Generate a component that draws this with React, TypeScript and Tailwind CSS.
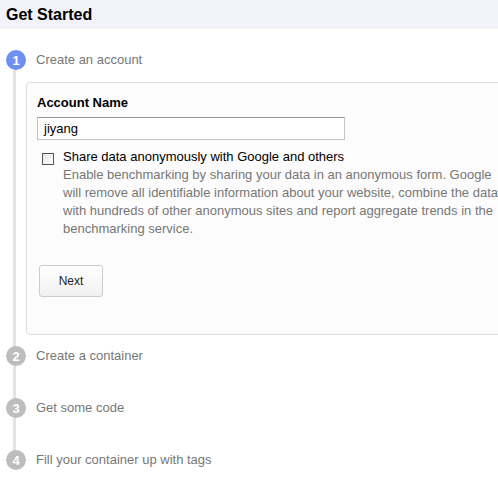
import React from "react";

function Step({ n, label, active }: { n: number; label: string; active?: boolean }) {
  return (
    <div className="relative flex h-[20px] items-center">
      <div
        className={
          active
            ? "flex h-[20px] w-[20px] items-center justify-center rounded-full bg-[#6d8ff0] text-[13px] font-bold leading-none text-white"
            : "flex h-[20px] w-[20px] items-center justify-center rounded-full bg-[#bdbdbd] text-[13px] font-bold leading-none text-white"
        }
      >
        {n}
      </div>
      <div className="ml-[10px] text-[13px] text-[#777777]">{label}</div>
    </div>
  );
}

export default function App() {
  return (
    <div className="h-[482px] w-[498px] overflow-hidden bg-white font-['Liberation_Sans',Arial,sans-serif]">
      <div className="flex h-[29px] items-center bg-[#f2f3f8] pl-[6px] text-[16px] font-bold text-black">
        Get Started
      </div>
      <div className="relative pl-[6px] pt-[21px]">
        <div className="absolute left-[13px] top-[31px] h-[399px] w-[3px] bg-[#e3e3e3]" />
        <Step n={1} label="Create an account" active />
        <div className="relative ml-[20px] mt-[12px] h-[253px] w-[490px] rounded-[4px] border border-[#dddddd] bg-[#fcfcfc] pl-[10px] pt-[13px]">
          <div className="text-[13px] font-bold leading-[14px] text-black">Account Name</div>
          <div className="mt-[7px] flex h-[23px] w-[308px] items-center border border-[#c4c4c4] border-t-[#9a9a9a] bg-white pl-[6px] text-[13px] text-black">
            jiyang
          </div>
          <div className="mt-[8px] flex">
            <div className="ml-[5px] mt-[5px] h-[12px] w-[12px] border border-[#555555] bg-gradient-to-br from-[#e6e6e6] to-white" />
            <div className="ml-[9px] w-[440px]">
              <div className="text-[13px] leading-[18px] text-black">Share data anonymously with Google and others</div>
              <div className="text-[13px] leading-[18px] text-[#777777]">
                Enable benchmarking by sharing your data in an anonymous form. Google will remove all identifiable
                information about your website, combine the data with hundreds of other anonymous sites and report
                aggregate trends in the benchmarking service.
              </div>
            </div>
          </div>
          <div className="ml-[2px] mt-[27px] flex h-[32px] w-[64px] items-center justify-center rounded-[3px] border border-[#cccccc] bg-gradient-to-b from-white to-[#f1f1f1] text-[12px] text-[#222222]">
            Next
          </div>
        </div>
        <div className="mt-[11px]">
          <Step n={2} label="Create a container" />
        </div>
        <div className="mt-[32px]">
          <Step n={3} label="Get some code" />
        </div>
        <div className="mt-[32px]">
          <Step n={4} label="Fill your container up with tags" />
        </div>
      </div>
    </div>
  );
}
